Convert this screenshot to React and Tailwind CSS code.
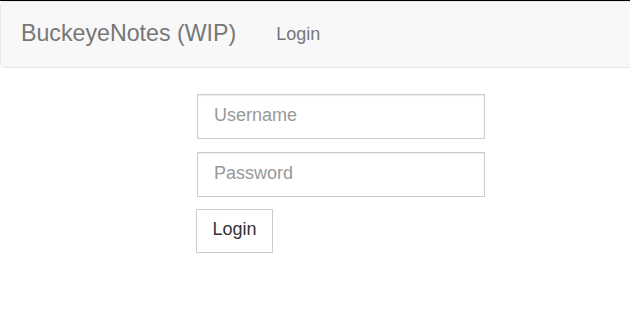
export default function App() {
  return (
    <div
      className="min-h-[330px] bg-white border-t border-black"
      style={{ fontFamily: '"Liberation Sans", Arial, sans-serif' }}
    >
      <nav className="h-[67px] bg-[#f8f8f8] border border-[#e7e7e7] rounded-l-[5px] flex items-center pb-[2px] mr-[-6px]">
        <a className="pl-[20px] text-[23.2px] text-[#777] leading-none">BuckeyeNotes (WIP)</a>
        <a className="ml-[40px] text-[18px] text-[#777] leading-none">Login</a>
      </nav>

      <form className="mt-[26px] ml-[197px] w-[288px] flex flex-col">
        <input
          type="text"
          placeholder="Username"
          className="h-[45px] px-[16px] pb-[3px] text-[18px] text-[#555] placeholder:text-[#999] border border-[#ccc] shadow-[inset_0_1px_1px_rgba(0,0,0,0.075)] outline-none"
        />
        <input
          type="password"
          placeholder="Password"
          className="mt-[13px] h-[45px] px-[16px] pb-[3px] text-[18px] text-[#555] placeholder:text-[#999] border border-[#ccc] shadow-[inset_0_1px_1px_rgba(0,0,0,0.075)] outline-none"
        />
        <button
          type="button"
          className="mt-[12px] -ml-px self-start h-[44px] px-[15.5px] pb-[4px] text-[18px] text-[#333] bg-white border border-[#ccc]"
        >
          Login
        </button>
      </form>
    </div>
  );
}
